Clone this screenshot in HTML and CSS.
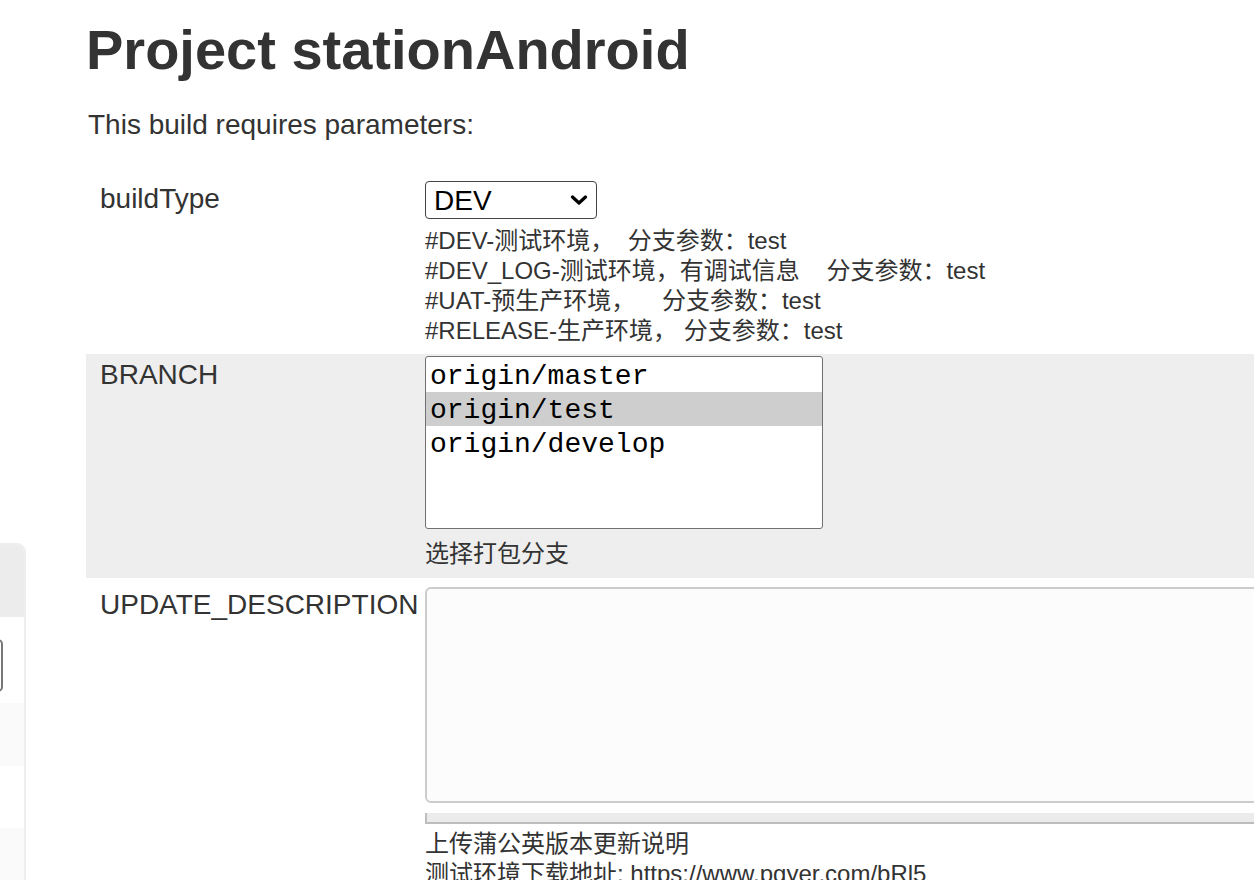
FILE: index.html
```html
<!DOCTYPE html>
<html lang="en">
<head>
<meta charset="utf-8">
<title>Project stationAndroid</title>
<link rel="stylesheet" href="styles.css">
</head>
<body>
<div class="page">
  <aside class="side">
    <div class="widget">
      <div class="widget-head"></div>
      <div class="widget-search"><div class="search-box"></div></div>
      <div class="widget-row alt"></div>
      <div class="widget-row"></div>
      <div class="widget-row alt"></div>
    </div>
  </aside>
  <main class="main">
    <h1 class="title">Project stationAndroid</h1>
    <p class="intro">This build requires parameters:</p>
    <div class="params">
      <div class="param param-type">
        <div class="param-label">buildType</div>
        <div class="param-value">
          <div class="select-wrap">
            <select class="select">
              <option>DEV</option>
              <option>DEV_LOG</option>
              <option>UAT</option>
              <option>RELEASE</option>
            </select>
            <svg class="chevron" viewBox="0 0 18 10" width="18" height="10"><path d="M2.5 2 L9 8 L15.5 2" fill="none" stroke="#000" stroke-width="3.2" stroke-linecap="round" stroke-linejoin="round"/></svg>
          </div>
          <div class="desc desc-type">
            <div>#DEV-测试环境，&nbsp; 分支参数：test</div>
            <div>#DEV_LOG-测试环境，有调试信息&nbsp; &nbsp; 分支参数：test</div>
            <div>#UAT-预生产环境，&nbsp; &nbsp; 分支参数：test</div>
            <div>#RELEASE-生产环境， 分支参数：test</div>
          </div>
        </div>
      </div>
      <div class="param param-branch">
        <div class="param-label">BRANCH</div>
        <div class="param-value">
          <div class="listbox">
            <div class="option">origin/master</div>
            <div class="option selected">origin/test</div>
            <div class="option">origin/develop</div>
          </div>
          <div class="desc desc-branch">选择打包分支</div>
        </div>
      </div>
      <div class="param param-update">
        <div class="param-label">UPDATE_DESCRIPTION</div>
        <div class="param-value">
          <textarea class="textarea"></textarea>
          <div class="textarea-handle"></div>
          <div class="desc desc-update">
            <div>上传蒲公英版本更新说明</div>
            <div>测试环境下载地址: https://www.pgyer.com/bRl5</div>
          </div>
        </div>
      </div>
    </div>
  </main>
</div>
</body>
</html>
```
FILE: styles.css
```css
html, body {
  margin: 0;
  padding: 0;
  overflow: hidden;
  background: #fff;
}
body {
  font-family: "Liberation Sans", "Noto Sans CJK SC", sans-serif;
  color: #333;
}
.page {
  display: flex;
  align-items: flex-start;
}
.side {
  flex: none;
  width: 26px;
  padding-top: 543px;
}
.widget {
  width: 300px;
  margin-left: -274px;
  border: 2px solid #eee;
  border-top-right-radius: 9px;
  background: #fff;
  box-sizing: border-box;
  overflow: hidden;
}
.widget-head {
  height: 72px;
  background: #ececec;
}
.widget-search {
  padding: 22px 21px 11px 0;
}
.search-box {
  height: 53px;
  box-sizing: border-box;
  border: 2px solid #777;
  border-radius: 5px;
}
.widget-row {
  height: 62px;
}
.widget-row.alt {
  background: #fafafa;
  height: 63px;
}
.main {
  flex: 1;
  min-width: 0;
  margin-left: 60px;
}
.title {
  margin: 18px 0 0;
  font-size: 56px;
  line-height: 64px;
  font-weight: bold;
  color: #333;
}
.intro {
  margin: 26px 0 0 2px;
  font-size: 28px;
  line-height: 34px;
}
.params {
  margin-top: 35px;
}
.param {
  display: grid;
  grid-template-columns: 339px 1fr;
}
.param-label {
  padding-left: 14px;
  font-size: 28px;
  line-height: 34px;
}
.param-type {
  padding: 4px 0 8px;
}
.param-type .param-label {
  padding-top: 1px;
}
.param-branch {
  padding: 2px 0 9px;
  background: #eee;
}
.param-branch .param-label {
  padding-top: 2px;
}
.param-update {
  padding-top: 9px;
}
.param-update .param-label {
  padding-top: 1px;
}
.select-wrap {
  position: relative;
  width: 172px;
}
.select {
  display: block;
  appearance: none;
  -webkit-appearance: none;
  width: 172px;
  height: 38px;
  box-sizing: border-box;
  margin: 0;
  padding: 0 0 0 8px;
  border: 1px solid #444;
  border-radius: 4px;
  background: #fff;
  color: #000;
  font-family: "Liberation Sans", sans-serif;
  font-size: 28px;
}
.chevron {
  position: absolute;
  right: 9px;
  top: 14px;
  pointer-events: none;
}
.desc {
  font-size: 24px;
  line-height: 30px;
  color: #333;
  margin-top: 5px;
}
.desc-type {
  margin-top: 7px;
}
.listbox {
  width: 398px;
  height: 173px;
  box-sizing: border-box;
  border: 1px solid #707070;
  border-radius: 3px;
  padding: 1px 0;
  background: #fff;
}
.option {
  height: 34px;
  box-sizing: border-box;
  padding: 3px 0 0 4px;
  line-height: 31px;
  font-family: "Liberation Mono", monospace;
  font-size: 28px;
  color: #000;
}
.option.selected {
  background: #cecece;
}
.desc-branch {
  margin-top: 10px;
}
.textarea {
  display: block;
  width: 900px;
  height: 216px;
  box-sizing: border-box;
  margin: 0;
  border: 2px solid #ccc;
  border-radius: 6px;
  background: #fcfcfc;
  resize: none;
}
.textarea-handle {
  width: 900px;
  height: 9px;
  margin-top: 10px;
  background: #ebebeb;
  border-left: 2px solid #bdbdbd;
  border-bottom: 2px solid #bdbdbd;
}
.desc-update {
  margin-top: 5px;
  white-space: nowrap;
}
```
